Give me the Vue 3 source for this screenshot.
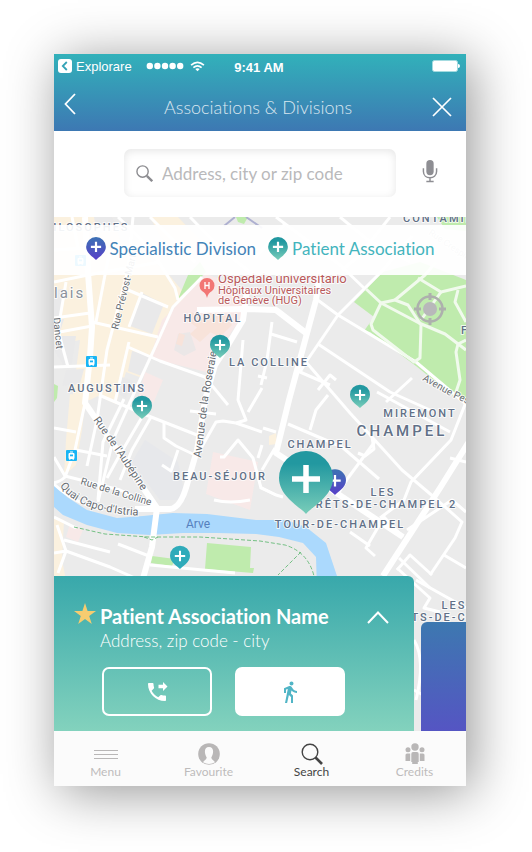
<script setup>
import { ref } from 'vue'

const query = ref('')

const creamBlocks = [
  'M54 217H112L120 240L165 270L190 300L172 306L157 342L142 378L126 372L116 404L98 396L90 400H72L80 340L54 345Z',
  'M150 217H178L200 240L186 262L160 236Z',
  'M70 394L86 397L82 430L76 465L64 476L66 440Z',
  'M54 516L64 520L62 560L66 580H54Z',
  'M269 436L276 433L277 444L269 445Z'
]
const greyBlocks = [
  'M142 293L164 304L152 334L130 326Z',
  'M132 351L150 356L142 376L128 371Z',
  'M94 217H112L118 228L97 234Z',
  'M122 377L133 381L126 398L118 394Z',
  'M54 321L64 319L60 332H54Z',
  'M54 336H76L72 363L64 366L54 350Z',
  'M66 370L84 369L80 384L62 386Z',
  'M54 290L64 289L60 316L54 317Z'
]
const pinkBlocks = [
  'M205 274L230 282L246 300L243 315L222 346L206 372L150 358L162 320L184 298Z',
  'M213 452L258 462L250 510L206 494Z',
  'M145 372L163 380L153 404L138 398Z',
  'M70 524L83 530L78 542L66 537Z'
]
const hospital = [
  'M190 334L203 322L213 330L200 342Z',
  'M207 312L226 316L232 325L220 337L206 330Z',
  'M179 333L185 335L182 346L176 344Z',
  'M184 318L192 312L212 326L206 334Z'
]
const parks = [
  'M354 302L383 272L420 262L466 280V400L456 398L416 366L370 332L364 331L374 317Z',
  'M437 217H466V231L445 229Z',
  'M200 262L188 275L178 299L184 293L200 278L206 272Z',
  'M236 217H248L244 224L238 222Z',
  'M54 384L58 386L57 398L54 402Z',
  'M207 543L251 547L250 568L254 568L253 573L205 569Z',
  'M152 556L175 559L172 566L151 563Z'
]

const wideRoads = [
  'M85 217L88 273L92 327L90 357L85 403L157 508L152 547L142 582',
  'M247 290L243 320L228 345L215 365L205 400L197 450L186 488Q180 508 170 509H135',
  'M320 270L316 300L306 337L289 400L276 453L403 537',
  'M470 440L440 488L383 576',
  'M197 310L245 309L276 310L306 333'
]
const roads = [
  'M133 217L128 270L107 350L97 420L87 466',
  'M85 403L75 450L65 477Q60 482 53 483',
  'M202 277L173 307L157 343L140 380L113 440L98 502',
  'M54 282L88 275L160 262', 'M54 318L90 313', 'M54 333L92 326', 'M54 367L110 365',
  'M92 322L158 337', 'M128 290L168 307', 'M142 292L129 327', 'M54 250L88 248L132 252',
  'M66 282L58 330L68 367', 'M72 217L78 248', 'M110 250L104 280L96 322',
  'M118 217L150 248L175 288L178 300', 'M150 217L195 262', 'M190 217L222 250L250 272',
  'M128 347L160 361L205 377L228 405', 'M129 342L115 402', 'M99 395L146 415L197 435',
  'M142 417L118 458L107 478', 'M151 417L132 450L120 480', 'M124 399L103 442L98 500',
  'M164 423V438L176 446L195 455', 'M76 450L107 456', 'M54 428L76 432', 'M54 457L65 476L120 490L156 507',
  'M54 484Q76 505 103 509', 'M195 455L200 450L216 422L223 421L236 423', 'M220 457L224 457L238 440L253 458L261 488L276 495',
  'M258 458L262 445', 'M236 423L246 420L238 400L243 340', 'M214 500Q230 504 250 500',
  'M236 423L262 432', 'M262 388L248 412', 'M178 450L171 471L162 465', 'M190 411L216 414',
  'M260 487L276 495L283 497', 'M263 428L276 432', 'M262 470L275 448',
  'M54 517L76 528', 'M57 525L66 551L58 573', 'M54 553L66 551L110 567L135 578', 'M118 544L149 556', 'M150 565L235 573',
  'M64 540L110 552', 'M306 362L338 315L383 270L412 236',
  'M315 298L338 315L416 362L466 404', 'M318 344L390 392L430 410',
  'M272 322L267 360L261 385', 'M271 334L297 342', 'M258 376L267 378', 'M330 385L300 372L306 362L350 413L372 437L402 470L435 498L462 522L455 538L430 575',
  'M276 217L340 265L365 289', 'M340 217L368 240L410 262', 'M285 224L255 258', 'M390 217L360 255L342 270',
  'M407 530L452 500L466 512', 'M397 570L410 555L432 575', 'M288 424L342 447L379 479',
  'M376 440L348 478L338 494', 'M466 402L451 440L411 482L404 500L380 518',
  'M403 537L384 517L366 548L375 556', 'M350 532L370 546', 'M372 437L374 449L365 456L358 453',
  'M318 390L330 375L336 380', 'M310 430L316 410L328 395', 'M377 392L450 432', 'M386 402L412 378',
  'M399 558L430 588', 'M416 580L466 608', 'M397 568L430 598L424 608L440 612',
  'M444 555L466 568', 'M466 462L450 458', 'M414 640Q426 660 416 700', 'M414 690L450 710'
]
const parkPaths = [
  'M366 289L381 303L419 323L445 334L466 350', 'M381 303L371 324L373 330L414 362L420 358L421 325L408 305L395 300L381 303',
  'M395 300L425 275L436 262', 'M418 278L441 292L466 286', 'M441 292L421 320', 'M466 340L458 344L456 352L460 380L454 398',
  'M458 290L455 302L466 322'
]

const districts = [
  { text: 'PHILOSOPHES', x: 82, y: 231, size: 11 },
  { text: 'CONTAMINES', x: 403, y: 222, size: 11, anchor: 'start' },
  { text: 'HÔPITAL', x: 213, y: 322, size: 11 },
  { text: 'LA COLLINE', x: 269, y: 366, size: 11 },
  { text: 'AUGUSTINS', x: 107, y: 392, size: 11 },
  { text: 'MIREMONT', x: 420, y: 417, size: 11 },
  { text: 'CHAMPEL', x: 402, y: 436, size: 15, large: true },
  { text: 'CHAMPEL', x: 320, y: 448, size: 11 },
  { text: 'BEAU-SÉJOUR', x: 220, y: 480, size: 11 },
  { text: 'LES', x: 383, y: 496, size: 11 },
  { text: 'CRÊTS-DE-CHAMPEL 2', x: 382, y: 508, size: 11 },
  { text: 'TOUR-DE-CHAMPEL', x: 340, y: 528, size: 11 },
  { text: 'F', x: 461, y: 334, size: 11, anchor: 'start' },
  { text: 'LES', x: 454, y: 609, size: 11 },
  { text: 'CRÊTS-DE-CHAMPEL', x: 385, y: 621, size: 11, anchor: 'start' }
]
const streets = [
  { id: 'prevost', text: 'Rue Prévost-Martin', d: 'M118 330L142 232', size: 10 },
  { id: 'aubepine', text: "Rue de l'Aubépine", d: 'M93 420L118 455L154 510', size: 11 },
  { id: 'colline', text: 'Rue de la Colline', d: 'M80 484L158 508', size: 10 },
  { id: 'quai', text: "Quai Capo-d'Istria", d: 'M60 486Q80 515 150 516', size: 11 },
  { id: 'roseraie', text: 'Avenue de la Roseraie', d: 'M201 458L208 400L220 335', size: 11 },
  { id: 'peschier', text: 'Avenue Peschier', d: 'M422 380L450 396L490 414', size: 10 },
  { id: 'dancet', text: 'Dancet', d: 'M53 318L57 354', size: 10 }
]
const pins = [
  { x: 220, y: 358, r: 10, tone: 'teal' },
  { x: 360, y: 408, r: 10, tone: 'teal' },
  { x: 142, y: 419, r: 10, tone: 'teal' },
  { x: 180, y: 569, r: 10, tone: 'flat' },
  { x: 335, y: 495, r: 11, tone: 'violet' },
  { x: 306, y: 514, r: 27, tone: 'teal' }
]
const tramStops = [[86, 356], [66, 450], [75, 255]]
</script>

<template>
  <main class="stage">
    <div class="screen">
      <header class="top">
        <div class="status">
          <div class="status-left">
            <svg class="return" viewBox="0 0 14 14"><rect width="14" height="14" rx="3" fill="#fff" /><path d="M8.8 3L4.8 7L8.8 11" fill="none" stroke="#35a3b7" stroke-width="1.8" /></svg>
            <span>Explorare</span>
            <svg class="signal" viewBox="0 0 38 8" fill="#fff"><circle v-for="n in 5" :key="n" :cx="n * 7.6 - 3.8" cy="4" r="3.2" /></svg>
            <svg class="wifi" viewBox="0 0 16 12" fill="none" stroke="#fff" stroke-width="1.8"><path d="M1 4.6Q8-1.8 15 4.6M3.5 7.3Q8 3.4 12.500 7.300" /><path d="M8 11.200L5.600 8.800Q8 7 10.400 8.800Z" fill="#fff" stroke="none" /></svg>
          </div>
          <strong class="clock">9:41 AM</strong>
          <svg class="battery" viewBox="0 0 28 12"><rect x=".5" y=".5" width="25" height="11" rx="2" fill="#fff" stroke="#a4dbe0" /><path d="M26 4Q28 4 28 6T26 8Z" fill="#fff" /></svg>
        </div>
        <div class="titlebar">
          <button class="plain" aria-label="Back"><svg class="back" viewBox="0 0 12 22"><path d="M11 1L1.500 11L11 21" fill="none" stroke="#fff" stroke-width="1.800" /></svg></button>
          <h1>Associations &amp; Divisions</h1>
          <button class="plain end" aria-label="Close"><svg class="close" viewBox="0 0 20 20"><path d="M1 1L19 19M19 1L1 19" stroke="#fff" stroke-width="1.700" /></svg></button>
        </div>
      </header>

      <form class="search" @submit.prevent>
        <label class="field">
          <svg class="lens" viewBox="0 0 22 22" fill="none" stroke="#8c8c90"><circle cx="8.500" cy="8.500" r="7.300" stroke-width="1.800" /><path d="M14 14L21 21" stroke-width="3" /></svg>
          <input v-model="query" type="text" placeholder="Address, city or zip code" aria-label="Address, city or zip code">
        </label>
        <button class="plain mic-button" type="button" aria-label="Voice search">
          <svg class="mic" viewBox="0 0 14 22"><rect x="3.500" y="0" width="7" height="14.500" rx="3.500" fill="#8e8e93" /><path d="M.7 8V11C.7 19 13.300 19 13.300 11V8M7 17V20.500M3.500 20.500H10.500" fill="none" stroke="#8e8e93" stroke-width="1.400" /></svg>
        </button>
      </form>

      <section class="map">
        <svg class="canvas" viewBox="54 217 412 514" preserveAspectRatio="xMidYMid slice">
          <defs>
            <linearGradient id="teal" x1="0" y1="0" x2="0" y2="1"><stop stop-color="#2298a0" offset=".2" /><stop offset="1" stop-color="#79cdb9" /></linearGradient>
            <linearGradient id="violet" x1="0" y1="0" x2="0" y2="1"><stop stop-color="#3d72b4" /><stop offset="1" stop-color="#583fc8" /></linearGradient>
            <linearGradient id="flat"><stop stop-color="#2fabba" /></linearGradient>
          </defs>
          <rect x="54" y="217" width="412" height="514" fill="#ebebeb" />
          <path d="M145 440L178 462L186 500H160L132 462Z" fill="#e7e8eb" />
          <path v-for="d in creamBlocks" :key="d" :d="d" fill="#fbf1df" />
          <path v-for="d in greyBlocks" :key="d" :d="d" fill="#e9e9ea" />
          <path v-for="d in pinkBlocks" :key="d" :d="d" fill="#f8e9e8" />
          <path d="M178 334L190 332L196 350L184 356L174 350Z" fill="#ebe7e7" />
          <path v-for="d in hospital" :key="d" :d="d" fill="#f8e3da" />
          <path v-for="d in parks" :key="d" :d="d" fill="#bfebad" />
          <path d="M54 482L67 497L87 510L117 518L143 516L173 513L207 514L256 520H286L306 527L326 543L337 576V590H317L316 557L303 543L279 537L256 534L217 533H183L150 535L117 533L87 525L63 515L54 507Z" fill="#abd9fd" />
          <g fill="none" stroke="#fff" stroke-linejoin="round">
            <path v-for="d in roads" :key="d" :d="d" stroke-width="3" />
            <path v-for="d in parkPaths" :key="d" :d="d" stroke="#f1faed" stroke-width="3" />
            <path v-for="d in wideRoads" :key="d" :d="d" stroke-width="6" />
          </g>
          <path d="M74 527L105 534L148 537L200 537L260 541L285 545Q308 552 314 576M301 552L278 575M144 537L152 540L158 537" fill="none" stroke="#74c084" stroke-dasharray="4 2" />
          <path d="M235 217L224 226M246 217L262 228" stroke="#aeb0d0" stroke-width="2" />

          <text class="lais" x="54" y="298">lais</text>
          <text class="arve" x="186" y="528">Arve</text>
          <g class="street">
            <template v-for="s in streets" :key="s.id">
              <path :id="s.id" :d="s.d" fill="none" />
              <text :font-size="s.size"><textPath :href="'#' + s.id">{{ s.text }}</textPath></text>
            </template>
            <text class="faint" x="428" y="234" font-size="9" transform="rotate(34 428 234)">Rue Crespin</text>
          </g>
          <text v-for="(t, i) in districts" :key="i" class="district" :class="{ large: t.large }" :x="t.x" :y="t.y" :font-size="t.size" :text-anchor="t.anchor || 'middle'">{{ t.text }}</text>
          <g class="clinic">
            <text x="218" y="283" font-size="13">Ospedale universitario</text>
            <text x="218" y="294" font-size="11">Hôpitaux Universitaires</text>
            <text x="218" y="304" font-size="11">de Genève (HUG)</text>
          </g>
          <path d="M207 298Q206 293 202 291A7.500 7.500 0 1 1 212 291Q208 293 207 298Z" fill="#f27674" />
          <path d="M205 282V289M209 282V289M205 285.500H209" stroke="#fff" stroke-width="1.300" />
          <g v-for="([x, y]) in tramStops" :key="x" :transform="`translate(${x} ${y})`">
            <rect width="11" height="11" rx="1" fill="#19b5f5" />
            <path d="M3 3.500H8V8.500H3ZM4 2H7M3.500 10L4.500 8.500M7.500 10L6.500 8.500" fill="#fff" stroke="#fff" />
            <path d="M4 4.500H7V6.300H4Z" fill="#19b5f5" />
          </g>
          <g v-for="p in pins" :key="p.x" :transform="`translate(${p.x} ${p.y}) scale(${p.r / 27})`">
            <path d="M0 0C-4 -6 -27 -17 -27 -36A27 27 0 1 1 27 -36C27 -17 4 -6 0 0Z" :fill="`url(#${p.tone})`" />
            <path d="M0 -49V-21M-14 -35H14" stroke="#fff" stroke-width="5.500" />
          </g>
        </svg>

        <div class="overlay">
          <div class="legend">
            <span class="key division"><svg viewBox="-27 -63 54 63"><path d="M0 0C-4 -6 -27 -17 -27 -36A27 27 0 1 1 27 -36C27 -17 4 -6 0 0Z" fill="url(#violet)" /><path d="M0 -50V-22M-14 -36H14" stroke="#fff" stroke-width="6" /></svg>Specialistic Division</span>
            <span class="key association"><svg viewBox="-27 -63 54 63"><path d="M0 0C-4 -6 -27 -17 -27 -36A27 27 0 1 1 27 -36C27 -17 4 -6 0 0Z" fill="url(#teal)" /><path d="M0 -50V-22M-14 -36H14" stroke="#fff" stroke-width="6" /></svg>Patient Association</span>
          </div>
          <button class="plain locate" aria-label="My location">
            <svg viewBox="0 0 32 32" fill="none" stroke="#adb0ad"><circle cx="16" cy="16" r="12.500" stroke-width="2.600" /><path d="M16 0V7M16 25V32M0 16H7M25 16H32" stroke-width="3" /><circle cx="16" cy="16" r="7" fill="#b8b8ba" stroke="none" /></svg>
          </button>
          <div class="cards">
            <article class="card">
              <svg class="star" viewBox="0 0 22 21"><path d="M11 0L13.600 8H22L15.200 12.900L17.800 21L11 16L4.200 21L6.800 12.900L0 8H8.400Z" fill="#f6cc70" /></svg>
              <div class="info">
                <h2>Patient Association Name</h2>
                <p>Address, zip code - city</p>
              </div>
              <button class="plain expand" aria-label="Expand"><svg viewBox="0 0 22 13"><path d="M1 12L11 1.500L21 12" fill="none" stroke="#fff" stroke-width="2" /></svg></button>
              <div class="actions">
                <button class="action call" aria-label="Call"><svg viewBox="0 0 24 24" fill="#fff"><path d="M22.500 6.500L18 2V4.700H13.500V8.300H18V11Z" /><path d="M20 15.500C18.750 15.500 17.550 15.300 16.430 14.930C16.080 14.820 15.690 14.900 15.410 15.170L13.210 17.370C10.380 15.930 8.060 13.620 6.620 10.790L8.820 8.580C9.100 8.310 9.180 7.920 9.070 7.570C8.700 6.450 8.500 5.250 8.500 4C8.500 3.450 8.050 3 7.500 3H4C3.450 3 3 3.450 3 4C3 13.390 10.610 21 20 21C20.550 21 21 20.550 21 20V16.500C21 15.950 20.550 15.500 20 15.500Z" /></svg></button>
                <button class="action walk" aria-label="Walking directions"><svg viewBox="0 0 24 24" fill="#51b5c6"><path d="M13.500 5.500C14.600 5.500 15.500 4.600 15.500 3.500S14.600 1.500 13.500 1.500S11.500 2.400 11.500 3.500S12.400 5.500 13.500 5.500ZM9.800 8.900L7 23H9.100L10.900 15L13 17V23H15V15.500L12.900 13.500L13.500 10.500C14.800 12 16.800 13 19 13V11C17.100 11 15.500 10 14.700 8.600L13.700 7C13.300 6.400 12.700 6 12 6C11.700 6 11.500 6.100 11.200 6.100L6 8.300V13H8V9.600Z" /></svg></button>
              </div>
            </article>
            <article class="next"></article>
          </div>
        </div>
      </section>

      <nav class="tabs">
        <a href="#menu"><svg viewBox="0 0 26 22"><path d="M1 7.500H25M1 11.500H25M1 15.500H25" stroke="#b9b7b7" stroke-width="1.200" /></svg>Menu</a>
        <a href="#favourite"><svg viewBox="0 0 22 22"><circle cx="11" cy="11" r="10.800" fill="#b9b7b7" /><path d="M5 19.300C6 17.300 8.500 17 8.700 14.500C6 10 6 4 11 4S16 10 13.300 14.500C13.500 17 16 17.300 17 19.300Q11 22.500 5 19.300Z" fill="#fbfbfb" /></svg>Favourite</a>
        <a href="#search" class="current"><svg viewBox="0 0 22 22" fill="none" stroke="#444"><circle cx="9" cy="9" r="7.800" stroke-width="1.400" /><path d="M14.500 14.500L21 21" stroke-width="2.600" /></svg>Search</a>
        <a href="#credits"><svg viewBox="0 0 22 22" fill="#b9b7b7"><circle cx="11" cy="4" r="3.700" /><circle cx="4" cy="6.700" r="2.500" /><circle cx="18" cy="6.700" r="2.500" /><path d="M7.300 11Q7.300 9 9 9H13Q14.700 9 14.700 11V19H13.800V21H8.200V19H7.300ZM1.500 12Q1.500 10.500 3 10.500H6.200V18H1.500ZM20.500 12Q20.500 10.500 19 10.500H15.800V18H20.500Z" /></svg>Credits</a>
      </nav>
    </div>
  </main>
</template>

<style>
body { background: #fff; }
</style>

<style scoped>
* { box-sizing: border-box; }
svg { display: block; }
.stage { min-height: 100vh; padding: 54px 66px 66px 54px; overflow: hidden; font-family: Lato, "Open Sans", sans-serif; font-variant-ligatures: none; }
.screen { display: flex; flex-direction: column; min-height: calc(100vh - 120px); background: #fff; box-shadow: 6px 6px 50px rgba(0, 0, 0, .42); }
.plain { display: block; padding: 0; border: 0; background: none; cursor: pointer; }

.top { height: 77px; color: #fff; background: linear-gradient(#32b1ba, #3d78b3); }
.status { display: grid; grid-template-columns: 1fr auto 1fr; height: 24px; padding: 0 6px 0 4px; font-family: "Liberation Sans", Arial, sans-serif; font-size: 13px; align-items: center; }
.status-left { display: flex; align-items: center; gap: 4px; }
.return { width: 14px; height: 14px; }
.signal { width: 38px; height: 8px; margin-left: 10px; }
.wifi { width: 15px; height: 11px; margin-left: 2px; }
.clock { padding-top: 3px; }
.battery { width: 28px; height: 12px; justify-self: end; }
.titlebar { display: grid; grid-template-columns: 1fr auto 1fr; align-items: center; height: 53px; padding: 4px 14px 0 10px; }
.titlebar .end { justify-self: end; }
.back { width: 12px; height: 22px; margin-bottom: 6px; }
.close { width: 20px; height: 20px; }
h1 { margin: 0; font-size: 18px; font-weight: 300; line-height: 24px; opacity: .8; }

.search { display: flex; align-items: center; height: 86px; padding: 0 28px 2px 70px; gap: 26px; }
.field { display: flex; flex: 1; align-items: center; height: 48px; min-width: 0; padding: 0 12px; gap: 9px; border-radius: 7px; background: #fff; box-shadow: inset 0 2px 8px rgba(0, 0, 0, .1); }
.lens { flex: none; width: 17px; height: 17px; }
input { flex: 1; min-width: 0; padding: 0; border: 0; outline: 0; background: none; color: #666; font: 17px Lato, sans-serif; }
input::placeholder { color: #b9b9bb; opacity: 1; }
.mic { width: 16px; height: 23px; }
.mic-button { margin-bottom: 4px; }

.map { position: relative; display: flex; flex: 1; min-height: 514px; overflow: hidden; }
.canvas { position: absolute; inset: 0; width: 100%; height: 100%; }
.canvas text { font-family: Roboto, sans-serif; paint-order: stroke; stroke: rgba(255, 255, 255, .75); stroke-width: 2px; stroke-linejoin: round; }
.canvas .district { fill: #617087; font-weight: 500; letter-spacing: 2px; }
.canvas .large { letter-spacing: 3px; }
.canvas .street text { fill: #686d73; }
.canvas .street .faint { fill: #b8babd; }
.canvas .lais { fill: #8b929c; font-size: 15px; letter-spacing: 2px; }
.canvas .arve { fill: #5580bd; font-size: 12px; stroke: none; }
.canvas .clinic text { fill: #b9595b; }
.overlay { position: relative; display: flex; flex: 1; flex-direction: column; min-width: 0; padding-top: 8px; }
.legend { display: flex; align-items: center; justify-content: center; height: 50px; gap: 12px; padding-bottom: 3px; background: rgba(255, 255, 255, .92); font-size: 17px; white-space: nowrap; }
.key { display: flex; align-items: center; gap: 4px; }
.key svg { width: 20px; height: 23px; }
.division { color: #4383b8; }
.association { color: #43b4bd; }
.locate { align-self: flex-end; margin: 18px 20px 0 0; }
.locate svg { width: 32px; height: 32px; }
.cards { display: flex; align-items: flex-end; gap: 7px; margin-top: auto; }
.card { display: grid; flex: 1; grid-template-columns: 22px 1fr 22px; column-gap: 4px; height: 155px; padding: 26px 25px 15px 20px; border-radius: 0 6px 0 0; background: linear-gradient(#38a8ab, #83d2bd); color: #fff; }
.star { width: 22px; height: 21px; margin-top: 1px; }
h2 { margin: 0; font-size: 20px; font-weight: 700; line-height: 28px; white-space: nowrap; }
.info p { margin: 0; font-size: 17px; font-weight: 300; line-height: 22px; }
.expand { align-self: start; margin-top: 9px; }
.expand svg { width: 22px; height: 13px; }
.actions { display: flex; grid-column: 1 / -1; align-self: end; gap: 23px; padding-left: 28px; }
.action { display: flex; align-items: center; justify-content: center; width: 110px; height: 49px; padding: 0; border: 2px solid #fff; border-radius: 7px; background: none; cursor: pointer; }
.action svg { width: 24px; height: 24px; }
.walk { background: #fff; }
.next { width: 45px; height: 109px; border-radius: 6px 0 0; background: linear-gradient(#3d78b0, #5555c3); }

.tabs { display: grid; grid-template-columns: repeat(4, 1fr); height: 55px; background: #fbfbfb; }
.tabs a { display: flex; flex-direction: column; align-items: center; padding-top: 12px; color: #bebcbc; font-size: 12px; line-height: 13px; text-decoration: none; }
.tabs svg { height: 22px; }
.tabs .current { color: #444; }
</style>
